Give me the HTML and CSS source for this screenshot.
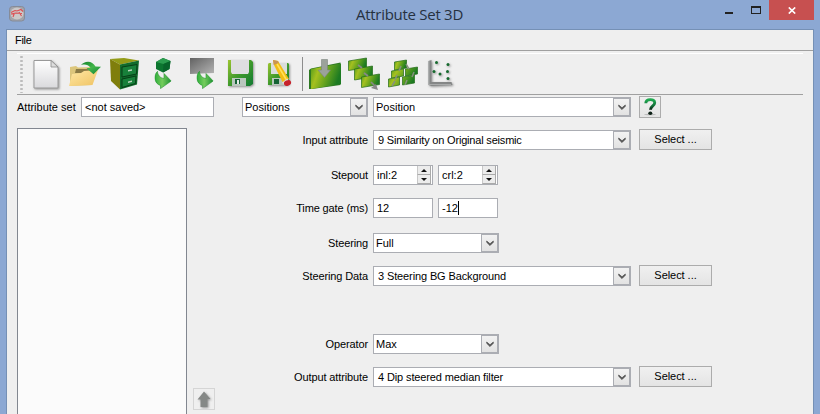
FILE: index.html
```html
<!DOCTYPE html>
<html lang="en">
<head>
<meta charset="utf-8">
<title>Attribute Set 3D</title>
<link rel="stylesheet" href="styles.css">
</head>
<body>
<svg class="defs" width="0" height="0" aria-hidden="true">
  <defs>
    <linearGradient id="paper" x1="0" y1="0" x2="0" y2="1"><stop offset="0" stop-color="#fff"/><stop offset="1" stop-color="#d9d9dc"/></linearGradient>
    <linearGradient id="folder" x1="0" y1="0" x2="1" y2="1"><stop offset="0" stop-color="#ffe9a6"/><stop offset="1" stop-color="#efc262"/></linearGradient>
    <linearGradient id="leaf" x1="0" y1="0" x2="1" y2="1"><stop offset="0" stop-color="#108028"/><stop offset=".5" stop-color="#42b64a"/><stop offset="1" stop-color="#128238"/></linearGradient>
    <linearGradient id="sweep" x1="0" y1="0" x2="1" y2="0"><stop offset="0" stop-color="#2fae3c"/><stop offset=".45" stop-color="#74cc5c"/><stop offset="1" stop-color="#1d9233"/></linearGradient>
    <linearGradient id="slab" x1="0" y1="0" x2="1" y2=".3"><stop offset="0" stop-color="#4f9a1a"/><stop offset=".3" stop-color="#a5c020"/><stop offset=".65" stop-color="#5fa01e"/><stop offset="1" stop-color="#1c7a22"/></linearGradient>
    <linearGradient id="grey" x1="0" y1="0" x2="1" y2="1"><stop offset="0" stop-color="#626262"/><stop offset="1" stop-color="#b4b4b4"/></linearGradient>
    <linearGradient id="disk" x1="0" y1="0" x2="1" y2="1"><stop offset="0" stop-color="#9cc530"/><stop offset=".5" stop-color="#3f9a2c"/><stop offset="1" stop-color="#117a32"/></linearGradient>
    <linearGradient id="help" x1="0" y1="0" x2="0" y2="1"><stop offset="0" stop-color="#1faa50"/><stop offset=".6" stop-color="#14713a"/><stop offset="1" stop-color="#0b1c12"/></linearGradient>
    <filter id="soft" x="-20%" y="-20%" width="150%" height="150%"><feDropShadow dx="1" dy="1" stdDeviation="0.8" flood-color="#555" flood-opacity=".6"/></filter>
    <symbol id="chevron" viewBox="0 0 8 6"><path d="M.7 1v1.300L4 5.600l3.300-3.300V1L4 3.800z" fill="#505050" stroke="#505050" stroke-width=".7"/></symbol>
    <symbol id="arrow-down" viewBox="0 0 17 18"><path d="M3 .3C-1 4-.8 12.300 6 14.500V17.600L16.700 10L9.500 2.500V7.500C5.500 7 3 4 3 .3Z" fill="url(#sweep)" stroke="#23932f" stroke-width=".6"/></symbol>
  </defs>
</svg>

<div class="window">
  <header class="titlebar">
    <svg class="app-icon" width="16" height="16" viewBox="0 0 16 16"><rect x=".5" y=".5" width="15" height="14.500" rx="3" fill="#a2a4aa" stroke="#858b98"/><ellipse cx="8" cy="7.500" rx="6.500" ry="6" fill="#cbc8c8"/><path d="M2 6.500L6 4.500L8 5L12 3.500L14 5.500M2 8L7 7L13 7.500M5.500 7L4 11M10 6L12.500 10" fill="none" stroke="#dc4e52" stroke-width="1.100"/></svg>
    <h1 class="title">Attribute Set 3D</h1>
    <div class="controls">
      <svg class="glyph" width="54" height="20" viewBox="715 0 54 20" shape-rendering="crispEdges"><path d="M725 12h8v2h-8z" fill="#222"/><path d="M751 6h10v8h-10zM752 8v5h8V8z" fill="#222" fill-rule="evenodd"/></svg>
      <div class="close"><svg width="8" height="7" viewBox="0 0 8 7"><path d="M.8.5L7.200 6.500M7.200.5L.8 6.500" stroke="#fff" stroke-width="1.700"/></svg></div>
    </div>
  </header>

  <div class="client">
    <nav class="menubar"><span>File</span></nav>

    <div class="toolbar">
      <div class="grip"></div>
      <svg class="tool" viewBox="27 54 39 40"><path d="M34 60.500h17l7 6.500v21H34z" fill="url(#paper)" stroke="#999" filter="url(#soft)"/><path d="M51 60.500V67h7z" fill="#ddd" stroke="#8c8c8c" stroke-width=".8"/></svg>
      <svg class="tool" viewBox="66 54 39 40"><path d="M70 67l6-1 2 1.500 14-.5v18l-22 1z" fill="#dcc67c"/><path d="M76 69h14v4H75z" fill="#8a7a45"/><path d="M72 74l9-1 3-2 14-1-5.500 15-23.500 1z" fill="url(#folder)"/><path d="M81 65c3-4 11-5.500 14.500 1.500l5.500.2-7.500 7.500-7-6 4-.5C88 64.500 85 64 81 65z" fill="url(#leaf)"/></svg>
      <svg class="tool" viewBox="105 54 39 40"><path d="M110 59l14-1 15 2.500-19 4z" fill="#939b17"/><path d="M110 59l10 5.500v25L111 81z" fill="#7f7e0c"/><path d="M120 64.500l19-4-2 24-17 5z" fill="#116c2c"/><path d="M122 67l15-2.500-.5 9.500-14.500 3zM122 79l14-3-.5 7.500-13.500 4z" fill="#18803a" stroke="#073f17"/><path d="M128 70l4-.8v1.500l-4 .8zM128 81.500l4-1V82l-4 1z" fill="#bdd5bf"/></svg>
      <svg class="tool" viewBox="144 54 39 40"><path d="M156 62l7-4 7.500 3-1 8-6.500 3.500-7-3.500z" fill="#0c752f"/><path d="M156 62l7-4 7.500 3-7 3z" fill="#2b9c4e"/><path d="M163.500 64l7-3-1 8-6.500 3.500z" fill="#08642a"/><use href="#arrow-down" x="154.500" y="71" width="17" height="18"/></svg>
      <svg class="tool" viewBox="183 54 39 40"><path d="M190 58h24v15l-24 1z" fill="url(#grey)"/><use href="#arrow-down" x="196.500" y="71" width="17" height="18"/></svg>
      <svg class="tool" viewBox="222 54 39 40"><g filter="url(#soft)"><path d="M228 60h23l2 2v22l-3 2h-22z" fill="url(#disk)"/><path d="M231 60h18v12l-1 2h-16l-1-2z" fill="#dedee0"/><path d="M232 78h14v8h-14z" fill="#b9c7bd"/><path d="M235 79h5v5h-5z" fill="#166434"/><path d="M237 80h2v4h-2z" fill="#e5ece7"/></g></svg>
      <svg class="tool" viewBox="261 54 39 40"><g filter="url(#soft)"><path d="M269 63h19l1 1v20l-2 1h-19V64z" fill="url(#disk)"/><path d="M271 63h16v11h-16z" fill="#d9dddc"/><path d="M272 78h13v7h-13z" fill="#b9c7bd"/><path d="M274 79h5v5h-5z" fill="#166434"/></g><path d="M273 60l5 1 11 18-6 4-9-18z" fill="#f2bd15"/><path d="M273 60l5 1 .7 2-5 2z" fill="#c99455"/><path d="M277 64l9.500 16" stroke="#ffe15a" stroke-width="1.500"/><path d="M282 82.500l5.500-4 1.500 2.500-5.500 3.500z" fill="#ddd"/><ellipse cx="287.500" cy="83" rx="3.700" ry="2.700" fill="#c7222b" transform="rotate(-25 287.500 83)"/></svg>
      <div class="divider"></div>
      <svg class="tool" viewBox="306 54 39 40"><path d="M309 70l2-1.500 29.500-6V85L312 89h-3z" fill="#2f7923"/><path d="M311 69l30-5.500V84l-30 5z" fill="url(#slab)"/><path d="M321.500 59.500h6V70h3l-6 7.500L318 70h3.500z" fill="#9ba29b" stroke="#7b857d" stroke-width=".6"/></svg>
      <svg class="tool" viewBox="345 54 39 40"><g stroke="#226b19" stroke-width=".7"><path d="M348.500 61l18-3v10l-18 2.500z" fill="url(#slab)"/><path d="M354.500 69l18-3v11l-18 3z" fill="url(#slab)"/><path d="M361.500 77l18-3v10.500l-18 3z" fill="url(#slab)"/></g><path d="M358 65l4 3M364 73l4 3M371 82l4 4" stroke="#888" stroke-width="1.700"/><path d="M378 90l-7-2 5-4z" fill="#888"/></svg>
      <svg class="tool" viewBox="384 54 39 40"><g stroke="#226b19" stroke-width=".7"><path d="M394.500 62l12-2v8l-12 2z" fill="url(#slab)"/><path d="M391.500 71l12-2v7l-12 2zM405.500 69l12-2v7l-12 2z" fill="url(#slab)"/><path d="M388.500 79l11-2v8l-11 2zM402.500 77l12-2v8l-12 2z" fill="url(#slab)"/></g><path d="M399 71l2-5M406 64l3 5M395 80l2-5M412 77l2-5M392 86l3-5M405 85l2-5" stroke="#85917d" stroke-width="1.500"/></svg>
      <svg class="tool" viewBox="423 54 39 40"><g filter="url(#soft)"><path d="M428.500 61l3-1v22h20l1 3-21 1-3-1z" fill="#858787"/><path d="M429 61v23.500h22" fill="none" stroke="#a9abab"/></g><g fill="#136a2e" filter="url(#soft)"><circle cx="436.500" cy="62.500" r="1.500"/><circle cx="448" cy="64.500" r="1.500"/><circle cx="434" cy="71.500" r="1.500"/><circle cx="440" cy="74" r="1.500"/><circle cx="447.500" cy="71.500" r="1.500"/><circle cx="448" cy="78.500" r="1.500"/></g></svg>
    </div>

    <div class="set-row">
      <label class="set-label">Attribute set</label>
      <div class="field set-name">&lt;not saved&gt;</div>
      <div class="field combo short category"><span>Positions</span><i class="drop"><svg width="8" height="6"><use href="#chevron"/></svg></i></div>
      <div class="field combo long"><span>Position</span><i class="drop"><svg width="8" height="6"><use href="#chevron"/></svg></i></div>
      <div class="button help"><svg width="20" height="20" viewBox="0 0 20 20"><ellipse cx="10" cy="17.500" rx="6" ry=".7" fill="#bbb"/><path d="M5.800 6.200C6 1.500 14.700 1.500 14.700 5.700C14.700 8.900 10.500 8.800 10.500 12.700" fill="none" stroke="url(#help)" stroke-width="2.900"/><ellipse cx="10.300" cy="16.200" rx="2" ry="1.700" fill="#0c1f14"/></svg></div>
    </div>

    <main class="body">
      <div class="list"></div>
      <div class="side"><div class="button up"><svg width="20" height="20" viewBox="0 0 20 20"><path d="M10 2.500l6.500 7.500h-3v8h-7v-7.500h-3z" fill="#858886" filter="url(#soft)"/></svg></div></div>
      <div class="form">
        <div class="row input"><label>Input attribute</label><div class="field combo long item"><span>9 Similarity on Original seismic</span><i class="drop"><svg width="8" height="6"><use href="#chevron"/></svg></i></div><div class="button select">Select ...</div></div>
        <div class="row stepout"><label>Stepout</label><div class="field spin"><span>inl:2</span><i class="steps"><b class="inc"></b><b class="dec"></b></i></div><div class="field spin"><span>crl:2</span><i class="steps"><b class="inc"></b><b class="dec"></b></i></div></div>
        <div class="row gate"><label>Time gate (ms)</label><div class="field small">12</div><div class="field small">-12<span class="caret"></span></div></div>
        <div class="row steering"><label>Steering</label><div class="field combo short"><span>Full</span><i class="drop"><svg width="8" height="6"><use href="#chevron"/></svg></i></div></div>
        <div class="row data"><label>Steering Data</label><div class="field combo long item"><span>3 Steering BG Background</span><i class="drop"><svg width="8" height="6"><use href="#chevron"/></svg></i></div><div class="button select">Select ...</div></div>
        <div class="row operator"><label>Operator</label><div class="field combo short"><span>Max</span><i class="drop"><svg width="8" height="6"><use href="#chevron"/></svg></i></div></div>
        <div class="row output"><label>Output attribute</label><div class="field combo long item"><span>4 Dip steered median filter</span><i class="drop"><svg width="8" height="6"><use href="#chevron"/></svg></i></div><div class="button select">Select ...</div></div>
      </div>
    </main>
  </div>
</div>
</body>
</html>
```
FILE: styles.css
```css
* { box-sizing: border-box; }
body {
  margin: 0;
  font: 11px/13px "Liberation Sans", Arial, sans-serif;
  color: #000;
  overflow: hidden;
}
.defs { display: block; height: 0; }
svg { display: block; flex: none; }
.window {
  width: 820px;
  height: 414px;
  background: #8ca8d3;
  display: flex;
  flex-direction: column;
}
.titlebar {
  height: 29px;
  flex: none;
  display: grid;
  grid-template-columns: 200px 1fr 200px;
}
.app-icon { margin: 6px 0 0 9px; }
.title {
  margin: 4px 1px 0 0;
  font: 15px/20px "Open Sans", "Noto Sans", sans-serif;
  letter-spacing: -0.28px;
  text-align: center;
  color: #26313f;
}
.controls { display: flex; justify-content: flex-end; margin-right: 6px; }
.close {
  width: 45px;
  height: 20px;
  background: #c75050;
  display: flex;
  justify-content: center;
  align-items: center;
}
.client {
  flex: 1;
  margin: 0 6px;
  border: 1px solid #7590b5;
  border-bottom: 0;
  background: #efefef;
  display: flex;
  flex-direction: column;
  overflow: hidden;
}
.menubar {
  height: 21px;
  flex: none;
  padding: 4px 8px;
  border-bottom: 1px solid #a0a0a0;
  letter-spacing: -0.3px;
}
.toolbar {
  height: 42px;
  flex: none;
  margin: 2px 10px 0;
  border-top: 1px solid #fff;
  border-bottom: 1px solid #a0a0a0;
  display: flex;
}
.grip {
  width: 3px;
  height: 38px;
  margin: 1px 4px 0 3px;
  background: radial-gradient(circle, #bcbcbc 0 1px, transparent 1.5px) 0 0 / 3px 4px;
}
.tool { width: 39px; height: 40px; }
.divider { width: 1px; height: 34px; margin: 3px 3px 0 2px; background: #8d8d8d; }
.field {
  height: 20px;
  flex: none;
  border: 1px solid #abadb3;
  background: #fff;
  padding: 3px 0 0 3px;
  white-space: nowrap;
}
.set-row { display: flex; align-items: center; margin: 1px 0 0 10px; flex: none; }
.set-label { width: 64px; }
.set-name { width: 133px; }
.category { margin-left: 28px; margin-right: 5px; }
.combo { display: flex; justify-content: space-between; padding: 0; }
.combo span { padding: 3px 0 0 2px; }
.combo.item span { padding-left: 4px; letter-spacing: -0.12px; }
.row.input .item span { letter-spacing: -0.19px; }
.short { width: 126px; }
.long { width: 258px; }
.drop {
  width: 17px;
  height: 18px;
  border: 1px solid #abadb3;
  background: linear-gradient(#f2f2f2, #e2e2e2);
  display: flex;
  justify-content: center;
  align-items: center;
}
.button {
  border: 1px solid #acacac;
  background: linear-gradient(#f0f0f0, #e4e4e4);
  flex: none;
}
.help { width: 22px; height: 22px; margin-left: 8px; }
.body { display: flex; flex: 1; min-height: 0; padding-left: 10px; }
.list { width: 170px; margin-top: 10px; border: 1px solid #828790; border-bottom: 0; background: #fbfbfb; }
.side { width: 34px; padding: 270px 0 0 6px; }
.up { width: 22px; height: 22px; border-color: #d5d5d5; background: #efefef; }
.form { padding-top: 12px; display: flex; flex-direction: column; }
.row { display: flex; height: 20px; flex: none; align-items: flex-end; }
.row label { width: 147px; padding-bottom: 3px; text-align: right; margin-right: 5px; letter-spacing: -0.12px; }
.row.stepout { margin-top: 15px; }
.row.gate { margin-top: 13px; }
.row.steering { margin-top: 15px; }
.row.data { margin-top: 13px; }
.row.operator { margin-top: 48px; }
.row.output { margin-top: 13px; }
.select { width: 73px; height: 21px; margin-left: 8px; padding-top: 3px; text-align: center; letter-spacing: -0.05px; }
.small, .spin { width: 60px; margin-right: 5px; }
.small { display: flex; }
.spin { display: flex; justify-content: space-between; padding: 0; }
.spin span { padding: 3px 0 0 3px; }
.steps { display: flex; flex-direction: column; width: 14px; margin-right: 1px; }
.steps b {
  height: 9px;
  border: 1px solid #c2c2c4;
  border-width: 0 1px 1px;
  border-color: #e0e0e0 #aaa #aaa #c8c8c8;
  background: #ececec;
  display: flex;
  justify-content: center;
  align-items: center;
}
.steps b::before { content: ""; border: 3px solid transparent; }
.steps .inc::before { border-top: 0; border-bottom-color: #111; }
.steps .dec::before { border-bottom: 0; border-top-color: #111; }
.caret { width: 1px; height: 14px; margin-top: -1px; background: #000; }
```
